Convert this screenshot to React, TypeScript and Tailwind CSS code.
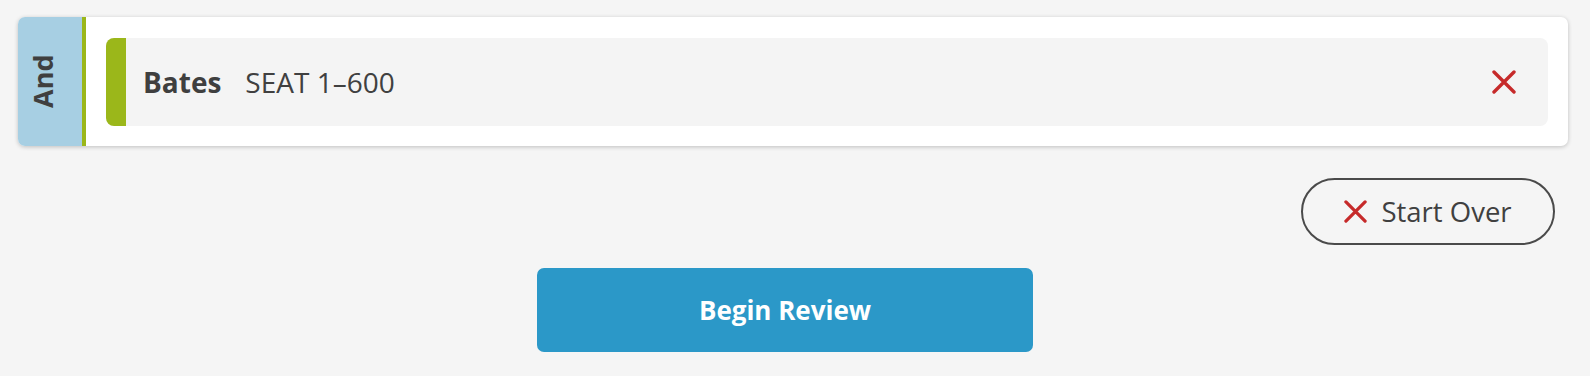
function Cross({ size, className }: { size: number; className?: string }) {
  return (
    <svg width={size} height={size} viewBox="0 0 24 24" className={className}>
      <path
        d="M2 2 L22 22 M22 2 L2 22"
        stroke="currentColor"
        strokeWidth={3.4}
        strokeLinecap="round"
        fill="none"
      />
    </svg>
  );
}

export default function App() {
  return (
    <div
      className="min-h-[376px] w-full bg-[#f5f5f5] text-[#404040]"
      style={{ fontFamily: '"Open Sans", "Liberation Sans", sans-serif' }}
    >
      <div className="pl-[18px] pr-[22px] pt-[17px]">
        {/* Query card */}
        <div className="flex h-[129px] rounded-[7px] bg-white shadow-[0_1px_4px_rgba(0,0,0,0.22)]">
          <div className="flex w-[64px] items-center justify-center rounded-l-[7px] bg-[#a7cfe3] pr-[12px]">
            <span className="-rotate-90 text-[27px] font-bold text-[#3f3f3f]">
              And
            </span>
          </div>
          <div className="w-[4px] bg-[#9bb71a]" />
          <div className="flex flex-1 items-center pl-[20px] pr-[20px]">
            <div className="flex h-[88px] flex-1 items-center overflow-hidden rounded-[8px] bg-[#f4f4f4]">
              <div className="h-full w-[20px] bg-[#9bb71a]" />
              <span className="ml-[17px] text-[28px] font-bold text-[#3f3f3f]">
                Bates
              </span>
              <span className="ml-[24px] text-[28px] text-[#404040]">
                SEAT 1–600
              </span>
              <button className="ml-auto mr-[32px] text-[#c62a2a]">
                <Cross size={24} />
              </button>
            </div>
          </div>
        </div>

        {/* Start over */}
        <div className="mt-[32px] flex justify-end pr-[13px]">
          <button className="flex h-[67px] w-[254px] items-center justify-center gap-[14px] rounded-full border-2 border-[#4a4a4a] text-[27.5px] text-[#404040]">
            <Cross size={23} className="text-[#c62a2a]" />
            <span>Start Over</span>
          </button>
        </div>

        {/* Begin review */}
        <div className="mt-[23px] flex justify-center pr-[16px]">
          <button className="h-[84px] w-[496px] rounded-[7px] bg-[#2b98c8] text-[26px] font-bold text-white">
            Begin Review
          </button>
        </div>
      </div>
    </div>
  );
}
